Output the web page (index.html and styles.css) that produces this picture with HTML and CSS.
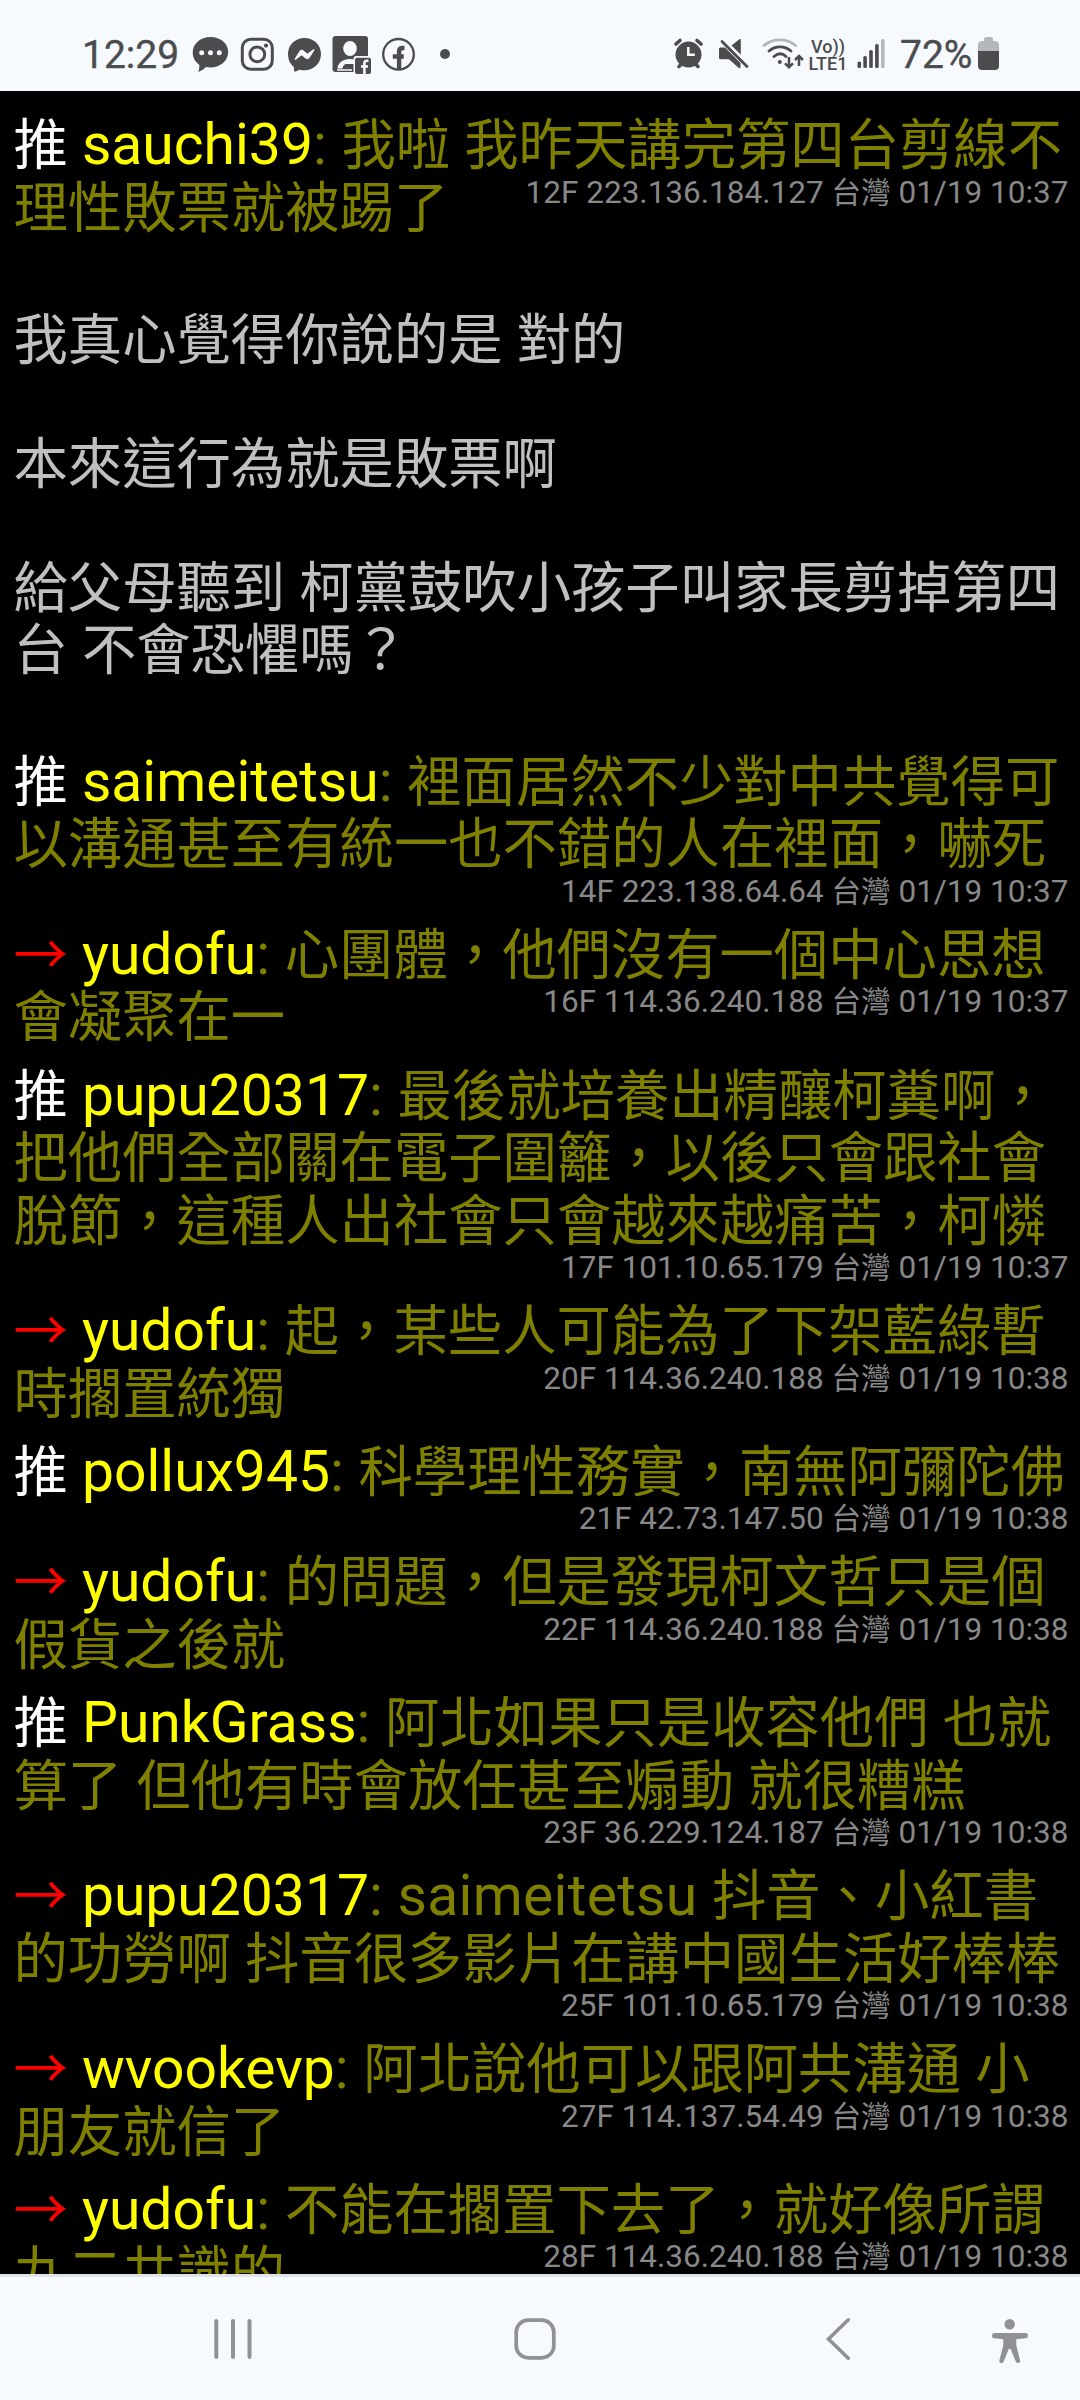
FILE: index.html
```html
<!DOCTYPE html>
<html lang="zh-Hant">
<head>
<meta charset="utf-8">
<title>PTT</title>
<link rel="stylesheet" href="styles.css">
</head>
<body>
<div class="screen">
  <header class="status">
    <span class="clock">12:29</span>
    <svg class="i-chat" width="37" height="44" viewBox="192 33 37 44"><path fill="#4b4c4d" d="M210.500 37c10 0 17.700 6.500 17.700 15s-7.700 15.500-17.700 15.500c-1.500 0-3-.1-4.500-.4-2 2.200-5 4.200-7.800 4.800 1-2.300 1.300-4.700 1-7.200-4-2.700-6.500-7.200-6.500-12.200 0-9 7.800-15.500 17.800-15.500z"/><g fill="#f6faff"><circle cx="201.700" cy="52.800" r="2.500"/><circle cx="210.500" cy="52.800" r="2.500"/><circle cx="219.300" cy="52.800" r="2.500"/></g></svg>
    <svg class="i-ig" width="34" height="44" viewBox="240 33 34 44"><g fill="none" stroke="#4b4c4d" stroke-width="3"><rect x="242.300" y="39.300" width="30" height="30" rx="8.500"/><circle cx="257.300" cy="54.300" r="7.400"/></g><circle cx="266" cy="45.600" r="2.100" fill="#4b4c4d"/></svg>
    <svg class="i-msg" width="35" height="44" viewBox="287 33 35 44"><path fill="#4b4c4d" d="M304.500 38c9.300 0 16.500 6.800 16.500 16s-7.200 16.300-16.500 16.300c-1.700 0-3.300-.2-4.800-.6l-4 1.700c-1 .4-1.700-.2-1.700-1l-.1-3.300C290 64 288 59.500 288 54c0-9.200 7.200-16 16.500-16z"/><path fill="#f6faff" d="M294.700 58.700l4.900-7.700c.8-1.200 2.400-1.500 3.500-.7l3.800 2.900c.4.300.8.300 1.200 0l5.200-3.900c.7-.5 1.600.3 1.100 1l-4.900 7.700c-.8 1.200-2.400 1.500-3.500.7l-3.800-2.900c-.4-.3-.8-.3-1.200 0l-5.200 3.900c-.7.500-1.600-.3-1.100-1z"/></svg>
    <svg class="i-contact" width="40" height="44" viewBox="332 33 40 44"><rect x="332.500" y="36" width="35.500" height="36" rx="3" fill="#4b4c4d"/><ellipse cx="350" cy="48.500" rx="6.800" ry="7.500" fill="#f6faff"/><path fill="#f6faff" d="M337.500 68.500c.5-6 6-9.500 12-9.500 4 0 7 1 9 3v2h-13c-2 1-3 3-3 4.500z"/><path stroke="#c9ccd0" stroke-width="2" d="M337 70h15"/><rect x="353.500" y="56" width="19" height="19" rx="3" fill="#f6faff"/><rect x="355" y="57.700" width="16" height="16.300" rx="2" fill="#4b4c4d"/><path fill="none" stroke="#f6faff" stroke-width="2.600" d="M368.500 60.800h-1.500c-1.800 0-2.600.8-2.600 2.600V74M361 66.500h7"/></svg>
    <svg class="i-fb" width="35" height="44" viewBox="381 33 35 44"><circle cx="398.500" cy="54.300" r="15.300" fill="none" stroke="#4b4c4d" stroke-width="2.300"/><path fill="none" stroke="#4b4c4d" stroke-width="4.400" d="M404.500 48h-2c-2.400 0-3.400 1.300-3.400 3.700V70M392.800 56.500h11"/></svg>
    <svg class="i-dot" width="12" height="44" viewBox="439 33 12 44"><circle cx="445" cy="54" r="5" fill="#4b4c4d"/></svg>
    <svg class="i-alarm" width="32" height="44" viewBox="673 33 32 44"><g stroke="#4b4c4d" stroke-width="3.600" stroke-linecap="round"><path d="M676 44l4-3.500M701 44l-4-3.500M679 66.500l3-3M698 66.500l-3-3"/></g><circle cx="688.500" cy="54.600" r="13" fill="#4b4c4d"/><path fill="none" stroke="#f6faff" stroke-width="2.500" d="M688.300 47v7.800h6.500"/></svg>
    <svg class="i-mute" width="32" height="44" viewBox="718 33 32 44"><path fill="#4b4c4d" d="M719 49c0-1 1-1.500 2-1.500h4l15.500 15.500v4c0 1.200-1 1.500-2 .8l-9.500-8.500h-8c-1.200 0-2-.5-2-1.500zM731.500 45.500l7.500-6c1-.8 1.800-.4 1.800.8v14.500z"/><path stroke="#4b4c4d" stroke-width="2.800" stroke-linecap="round" d="M722 41.500l25 25"/></svg>
    <svg class="i-wifi" width="43" height="44" viewBox="761 33 43 44"><g fill="none" stroke="#4b4c4d" stroke-width="2.900" stroke-linecap="round"><path stroke="#b4b7ba" d="M764 45.500c9-7.500 22.500-7.500 31.500 0"/><path d="M769 51c6.500-5.500 15.500-5.500 22 0M774 56.500c4-3.300 8.500-3.300 12 0"/></g><circle cx="779.800" cy="62" r="2" fill="#4b4c4d"/><path fill="none" stroke="#4b4c4d" stroke-width="2.500" d="M789 57v10M785 63.300l4 4 4-4M799 66V56M795 60l4-4 4 4"/></svg>
    <span class="volte"><b>Vo))</b><b>LTE1</b></span>
    <svg class="i-signal" width="29" height="44" viewBox="857 33 29 44"><g fill="#4b4c4d"><rect x="857.500" y="61.500" width="3.600" height="6.500" rx="1.500"/><rect x="863.300" y="56" width="3.600" height="12" rx="1.500"/><rect x="869.200" y="50" width="3.600" height="18" rx="1.500"/><rect x="875.100" y="44" width="3.600" height="24" rx="1.500"/><rect x="881" y="39" width="3.600" height="29" rx="1.500" fill="#b4b7ba"/></g></svg>
    <span class="percent">72%</span>
    <svg class="i-batt" width="22" height="44" viewBox="978 33 22 44"><path fill="#b4b8bd" d="M978 51v-6c0-2.500 1.500-4 4-4h2v-2c0-1 .8-2 2-2h5c1.200 0 2 1 2 2v2h2c2.500 0 4 1.500 4 4v6z"/><path fill="#4b4c4d" d="M978 51h21v15c0 2.500-1.500 4-4 4h-13c-2.500 0-4-1.500-4-4z"/></svg>
  </header>

  <main class="thread">
    <article class="push"><span class="tag">推</span> <span class="id">sauchi39</span><span class="colon">: </span>我啦 我昨天講完第四台剪線不<br>理性敗票就被踢了<span class="meta">12F 223.136.184.127 <i>台灣</i> 01/19 10:37</span></article>
    <section class="quote">
      <p>我真心覺得你說的是 對的</p>
      <p>本來這行為就是敗票啊</p>
      <p>給父母聽到 柯黨鼓吹小孩子叫家長剪掉第四<br>台 不會恐懼嗎？</p>
    </section>
    <article class="push"><span class="tag">推</span> <span class="id">saimeitetsu</span><span class="colon">: </span>裡面居然不少對中共覺得可<br>以溝通甚至有統一也不錯的人在裡面，嚇死<span class="meta">14F 223.138.64.64 <i>台灣</i> 01/19 10:37</span></article>
    <article class="push"><span class="tag arrow">→</span> <span class="id">yudofu</span><span class="colon">: </span>心團體，他們沒有一個中心思想<br>會凝聚在一<span class="meta">16F 114.36.240.188 <i>台灣</i> 01/19 10:37</span></article>
    <article class="push"><span class="tag">推</span> <span class="id">pupu20317</span><span class="colon">: </span>最後就培養出精釀柯糞啊，<br>把他們全部關在電子圍籬，以後只會跟社會<br>脫節，這種人出社會只會越來越痛苦，柯憐<span class="meta">17F 101.10.65.179 <i>台灣</i> 01/19 10:37</span></article>
    <article class="push"><span class="tag arrow">→</span> <span class="id">yudofu</span><span class="colon">: </span>起，某些人可能為了下架藍綠暫<br>時擱置統獨<span class="meta">20F 114.36.240.188 <i>台灣</i> 01/19 10:38</span></article>
    <article class="push"><span class="tag">推</span> <span class="id">pollux945</span><span class="colon">: </span>科學理性務實，南無阿彌陀佛<span class="meta">21F 42.73.147.50 <i>台灣</i> 01/19 10:38</span></article>
    <article class="push"><span class="tag arrow">→</span> <span class="id">yudofu</span><span class="colon">: </span>的問題，但是發現柯文哲只是個<br>假貨之後就<span class="meta">22F 114.36.240.188 <i>台灣</i> 01/19 10:38</span></article>
    <article class="push"><span class="tag">推</span> <span class="id">PunkGrass</span><span class="colon">: </span>阿北如果只是收容他們 也就<br>算了 但他有時會放任甚至煽動 就很糟糕<span class="meta">23F 36.229.124.187 <i>台灣</i> 01/19 10:38</span></article>
    <article class="push"><span class="tag arrow">→</span> <span class="id">pupu20317</span><span class="colon">: saimeitetsu </span>抖音、小紅書<br>的功勞啊 抖音很多影片在講中國生活好棒棒<span class="meta">25F 101.10.65.179 <i>台灣</i> 01/19 10:38</span></article>
    <article class="push"><span class="tag arrow">→</span> <span class="id">wvookevp</span><span class="colon">: </span>阿北說他可以跟阿共溝通 小<br>朋友就信了<span class="meta">27F 114.137.54.49 <i>台灣</i> 01/19 10:38</span></article>
    <article class="push"><span class="tag arrow">→</span> <span class="id">yudofu</span><span class="colon">: </span>不能在擱置下去了，就好像所謂<br>九二共識的<span class="meta">28F 114.36.240.188 <i>台灣</i> 01/19 10:38</span></article>
  </main>

  <nav class="navbar">
    <svg class="n-recents" width="40" height="50" viewBox="213 2314 40 50"><path stroke="#8f9194" stroke-width="4" stroke-linecap="round" d="M216.300 2321v36M233 2321v36M249.500 2321v36"/></svg>
    <svg class="n-home" width="46" height="50" viewBox="512 2314 46 50"><rect x="516.200" y="2320.200" width="37.600" height="37.600" rx="12" fill="none" stroke="#8f9194" stroke-width="3.700"/></svg>
    <svg class="n-back" width="28" height="50" viewBox="824 2314 28 50"><path fill="none" stroke="#8f9194" stroke-width="3.600" stroke-linecap="round" d="M848.300 2319.800L828.500 2339l19.800 19.200"/></svg>
    <svg class="n-access" width="40" height="50" viewBox="990 2314 40 50"><g fill="#8f9194"><circle cx="1009.700" cy="2324.300" r="5.200"/><path d="M994.700 2333h30.600c3.600 0 3.600 5.300 0 5.300l-9 1v6l3.700 15c.6 2.900-3.200 3.900-4.200 1.200l-5.200-12.500h-1.800l-5.200 12.500c-1 2.700-4.800 1.700-4.200-1.200l3.900-15v-6l-8.600-1c-3.600 0-3.600-5.300 0-5.300z"/></g></svg>
  </nav>
</div>
</body>
</html>
```
FILE: styles.css
```css
* { box-sizing: border-box; }

body {
  margin: 0;
  background: #000;
  font-family: Roboto, "Noto Sans CJK TC", sans-serif;
}

.screen {
  width: 1080px;
  height: 2400px;
  display: flex;
  flex-direction: column;
  overflow: hidden;
}

/* Status bar */
.status {
  flex: none;
  height: 91px;
  padding: 18px 0 0 82px;
  display: flex;
  align-items: center;
  background: #f6faff;
  color: #4b4c4d;
}
.status svg { flex: none; display: block; }
.clock, .percent {
  flex: none;
  font-size: 39px;
  line-height: 44px;
  -webkit-text-stroke: 0.4px #4b4c4d;
  white-space: nowrap;
}
.clock { width: 98px; }
.i-chat { margin-left: 12px; }
.i-ig { margin-left: 11px; }
.i-msg { margin-left: 13px; }
.i-contact { margin-left: 10px; }
.i-fb { margin-left: 9px; }
.i-dot { margin-left: 23px; }
.i-alarm { margin-left: 222px; }
.i-mute { margin-left: 13px; }
.i-wifi { margin-left: 11px; }
.volte {
  width: 40px;
  margin-left: 4px;
  display: flex;
  flex-direction: column;
  align-items: center;
}
.volte b {
  font-size: 18px;
  line-height: 17px;
  font-weight: 500;
}
.i-signal { margin-left: 9px; }
.percent { width: 75px; margin-left: 14px; }
.i-batt { margin-left: 3px; }

/* Thread */
.thread {
  flex: none;
  height: 2183px;
  padding-top: 16px;
  overflow: hidden;
  font-size: 54.35px;
  line-height: 62.5px;
  word-spacing: 0.6px;
  white-space: nowrap;
}
.push {
  display: flow-root;
  padding: 8px 11.500px 7.9px 13.5px;
  color: #808000;
}
.tag { color: #fff; }
.arrow { color: #f00; }
.id, .colon {
  font-size: 57px;
  line-height: 50px;
  word-spacing: 0;
}
.id { color: #ff0; }
.colon { letter-spacing: 0.3px; }
.meta {
  float: right;
  height: 32px;
  font-size: 31.5px;
  line-height: 30.5px;
  color: #888;
  word-spacing: 0;
}
.meta i {
  font-style: normal;
  font-size: 29.6px;
}
.quote {
  padding: 62px 13.5px;
  line-height: 62px;
  color: #c0c0c0;
}
.quote p { margin: 0 0 62px; }
.quote p:last-child { margin-bottom: 0; }

/* Navigation bar */
.navbar {
  flex: 1;
  display: flex;
  align-items: flex-start;
  padding: 37px 0 0 213px;
  border-top: 3px solid #dfe4e8;
  background: #f6faff;
}
.n-home { margin-left: 259px; }
.n-back { margin-left: 266px; }
.n-access { margin-left: 138px; }
```
